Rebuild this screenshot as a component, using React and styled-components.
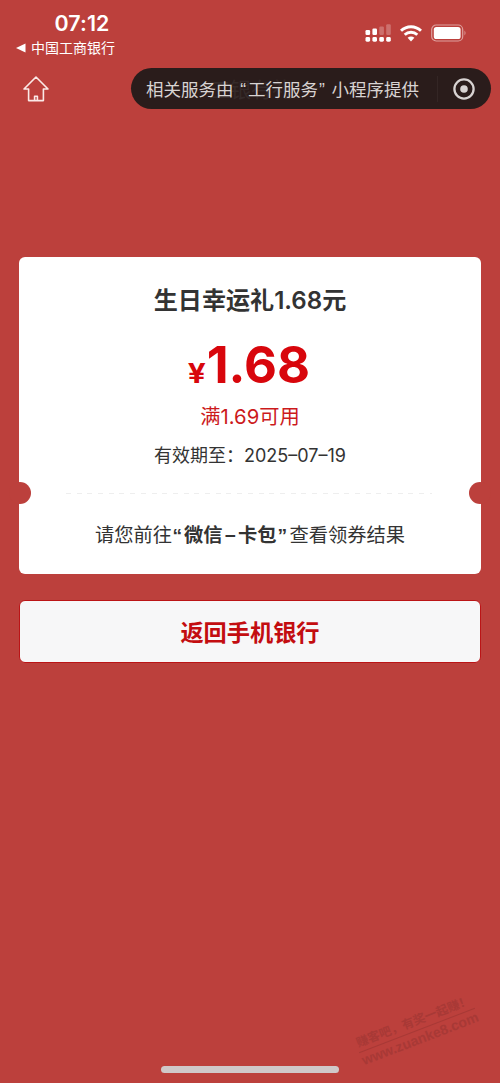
import React from "react";
import styled, { createGlobalStyle } from "styled-components";

const GlobalStyle = createGlobalStyle`
  * { box-sizing: border-box; }
  body { margin: 0; background: #bc403c; }
`;

const Screen = styled.div`
  position: relative;
  width: 500px;
  height: 1083px;
  overflow: hidden;
  display: flex;
  flex-direction: column;
  background: #bc403c;
  font-family: Inter, "Noto Sans CJK SC", sans-serif;
  white-space: nowrap;
`;

const StatusBar = styled.header`
  display: flex;
  justify-content: space-between;
  height: 68px;
  padding: 10px 33px 0 16px;
  color: #fff;
`;

const Clock = styled.div`
  padding-left: 38.5px;
  font-size: 21.4px;
  font-weight: 600;
  line-height: 27px;
  letter-spacing: 0.1px;
`;

const BackLink = styled.div`
  display: flex;
  align-items: center;
  gap: 5px;
  height: 22px;
  font-size: 14px;
  line-height: 22px;
`;

const StatusIcons = styled.div`
  display: flex;
  align-items: center;
  gap: 9px;
  height: 46px;
`;

const NavBar = styled.nav`
  display: flex;
  align-items: center;
  justify-content: space-between;
  height: 41px;
  padding: 0 9px 0 22px;
`;

const Capsule = styled.div`
  position: relative;
  display: flex;
  align-items: center;
  width: 360px;
  height: 41px;
  padding: 0 15px;
  border-radius: 21px;
  background: #2a1c1b;
  color: #d8d3d2;
  font-size: 17.5px;
`;

const GhostTitle = styled.span`
  position: absolute;
  left: 78px;
  top: 7px;
  color: #352a29;
  font-size: 21px;
  line-height: 29px;
`;

const CapsuleText = styled.span`
  position: relative;
  flex: 1;
`;

const Quote = styled.span`
  display: inline-block;
  width: ${(p) => p.$width}px;
  font-family: "Liberation Sans", Arial, sans-serif;
  text-align: ${(p) => (p.$close ? "left" : "right")};
  padding: ${(p) => (p.$close ? "0 0 0 1px" : "0 2px 0 0")};
`;

const Divider = styled.i`
  width: 1px;
  height: 26px;
  margin-right: 14.5px;
  background: #342625;
`;

const Card = styled.section`
  position: relative;
  display: flex;
  flex-direction: column;
  align-items: center;
  height: 317px;
  margin: 148px 19px 0;
  padding-top: 26px;
  border-radius: 6px;
  background: #fff;
  color: #333;
`;

const Notch = styled.i`
  position: absolute;
  top: 225px;
  ${(p) => p.$side}: -10px;
  width: 22px;
  height: 22px;
  border-radius: 50%;
  background: #bc403c;
`;

const Title = styled.h1`
  margin: 0;
  font-size: 24.1px;
  font-weight: 600;
  line-height: 36px;
`;

const Amount = styled.div`
  display: flex;
  align-items: baseline;
  height: 62px;
  margin-top: 15px;
  color: #d8060c;
  font-size: 50.8px;
  font-weight: 700;
  line-height: 62px;
`;

const Currency = styled.span`
  margin-right: 1px;
  font-size: 27.5px;
  transform: scaleX(1.15);
  transform-origin: right;
`;

const Condition = styled.div`
  margin-top: 6px;
  color: #cc1a1c;
  font-size: 20.3px;
  line-height: 30px;
`;

const Validity = styled.div`
  margin-top: 11px;
  font-size: 18px;
  line-height: 26px;
`;

const Dashes = styled.hr`
  width: 366px;
  height: 1px;
  margin: 24px 2px 0 0;
  border: 0;
  background: repeating-linear-gradient(90deg, #eee 0 5px, transparent 5px 10.7px);
`;

const Hint = styled.p`
  margin: 26px 0 0;
  font-size: 19.25px;
  line-height: 30px;
  b { font-weight: 600; }
`;

const Dash = styled.span`
  display: inline-block;
  width: 15.5px;
  text-align: center;
`;

const ReturnButton = styled.button`
  height: 63px;
  margin: 26px 19px 0;
  padding: 2px 0 0;
  border: 1.5px solid #bb1416;
  border-radius: 6px;
  background: #f7f7f8;
  color: #c30d10;
  font: 600 23.2px/32px Inter, "Noto Sans CJK SC", sans-serif;
`;

const Watermark = styled.div`
  position: absolute;
  left: 355px;
  top: 1013px;
  width: 124px;
  transform: rotate(-21deg);
  color: #a83936;
  font: 700 12px/17px "Liberation Sans", "Noto Sans CJK SC", sans-serif;
  text-align: center;
`;

const WatermarkLine = styled.div`
  border-bottom: ${(p) => (p.$rule ? "1px solid #a83936" : "0")};
  font-size: ${(p) => p.$size}px;
`;

const HomeIndicator = styled.div`
  width: 178px;
  height: 7px;
  margin: auto auto 10px;
  border-radius: 4px;
  background: #d0c8c9;
`;

function SignalIcon() {
  return (
    <svg width="26" height="18" viewBox="0 0 26 18" fill="#fff">
      <rect x="0.5" y="6" width="4.6" height="5" rx="1.2" />
      <rect x="7.4" y="4.5" width="4.6" height="6.5" rx="1.2" />
      <g opacity="0.25">
        <rect x="14.3" y="2.5" width="4.6" height="8.5" rx="1.2" />
        <rect x="21.2" y="0.3" width="4.6" height="10.7" rx="1.2" />
      </g>
      {[0.5, 7.4, 14.3, 21.2].map((x) => (
        <rect key={x} x={x} y="13" width="4.6" height="4.7" rx="1.4" />
      ))}
    </svg>
  );
}

function WifiIcon() {
  return (
    <svg width="22" height="17" viewBox="0 0 22 17" fill="none" stroke="#fff" strokeWidth="2.9">
      <path d="M1 5.8C6.7.3 15.3.3 21 5.8" />
      <path d="M4.7 9.8c3.6-3.4 9-3.4 12.6 0" />
      <path d="M7.6 12.8c2-1.7 4.8-1.7 6.8 0L11 16.4z" fill="#fff" stroke="none" />
    </svg>
  );
}

function BatteryIcon() {
  return (
    <svg width="36" height="18" viewBox="0 0 36 18">
      <rect x="0.7" y="1" width="31" height="16" rx="4.5" fill="none" stroke="#fff" strokeOpacity="0.5" strokeWidth="1.2" />
      <rect x="2.8" y="3" width="26.8" height="12" rx="2.6" fill="#fff" />
      <path d="M33.5 6.5q2 2.5 0 5z" fill="#fff" opacity="0.5" />
    </svg>
  );
}

function HomeIcon() {
  return (
    <svg width="28" height="28" viewBox="0 0 28 28" fill="none" stroke="#fbe9e7" strokeWidth="1.6" strokeLinejoin="round">
      <path d="M14 2 2 14h4.6v11.6h14.8V14H26zM12.6 25.6V21.2h2.8v4.4" />
    </svg>
  );
}

function TargetIcon() {
  return (
    <svg width="24" height="24" viewBox="0 0 24 24">
      <circle cx="12" cy="12" r="9.6" fill="none" stroke="#d8d3d2" strokeWidth="2.3" />
      <circle cx="12" cy="12" r="3.8" fill="#d8d3d2" />
    </svg>
  );
}

export default function App() {
  return (
    <Screen>
      <GlobalStyle />
      <StatusBar>
        <div>
          <Clock>07:12</Clock>
          <BackLink>
            <svg width="10" height="10" viewBox="0 0 10 10" fill="#fff"><path d="M0 5 9.5.5v9z" /></svg>
            中国工商银行
          </BackLink>
        </div>
        <StatusIcons>
          <SignalIcon />
          <WifiIcon />
          <BatteryIcon />
        </StatusIcons>
      </StatusBar>
      <NavBar>
        <HomeIcon />
        <Capsule>
          <GhostTitle>工银有礼</GhostTitle>
          <CapsuleText>
            相关服务由<Quote $width={14.5}>“</Quote>工行服务<Quote $close $width={13.5}>”</Quote>小程序提供
          </CapsuleText>
          <Divider />
          <TargetIcon />
        </Capsule>
      </NavBar>
      <Card>
        <Notch $side="left" />
        <Notch $side="right" />
        <Title>生日幸运礼1.68元</Title>
        <Amount><Currency>¥</Currency>1.68</Amount>
        <Condition>满1.69可用</Condition>
        <Validity>有效期至：2025–07–19</Validity>
        <Dashes />
        <Hint>
          请您前往<b><Quote $width={12}>“</Quote>微信<Dash>–</Dash>卡包<Quote $close $width={13}>”</Quote></b>查看领券结果
        </Hint>
      </Card>
      <ReturnButton>返回手机银行</ReturnButton>
      <Watermark>
        <WatermarkLine $rule $size={12.2}>赚客吧，有奖一起赚！</WatermarkLine>
        <WatermarkLine $size={14}>www.zuanke8.com</WatermarkLine>
      </Watermark>
      <HomeIndicator />
    </Screen>
  );
}
